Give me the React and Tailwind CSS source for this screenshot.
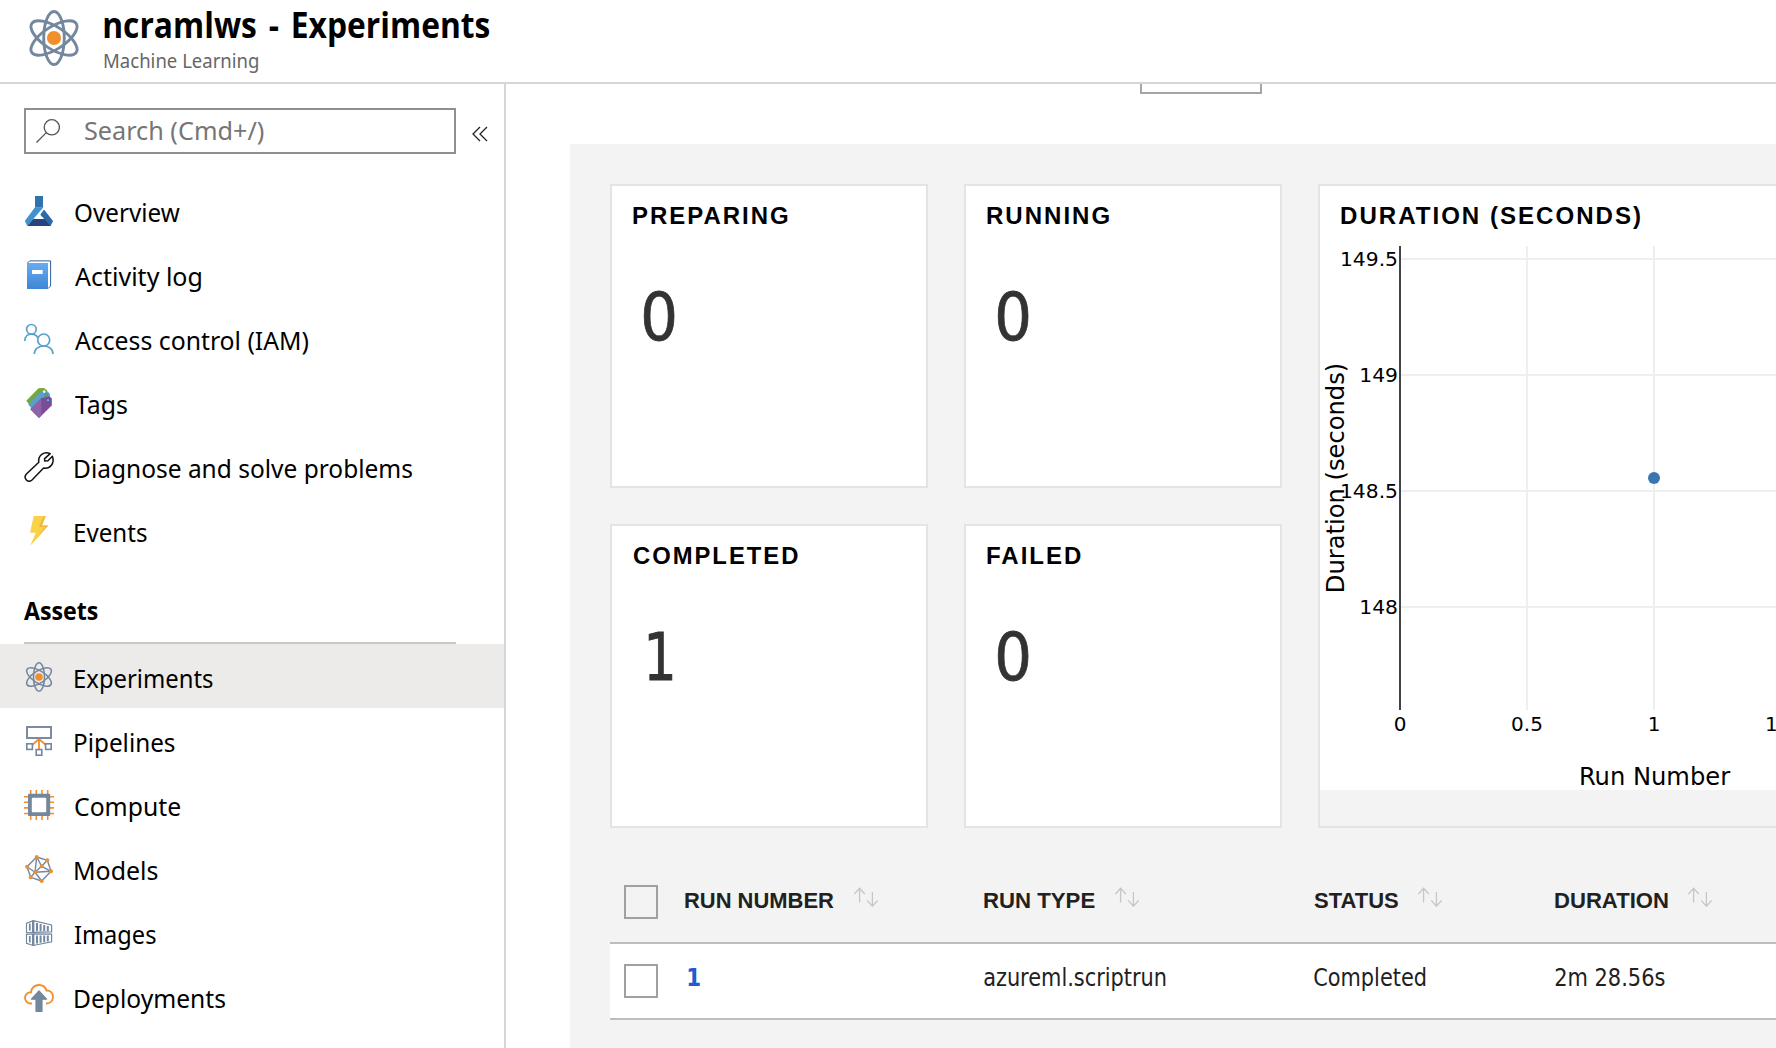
import React, { useLayoutEffect, useRef, useState } from "react";

/* Single line of text whose drawn glyphs start at the left edge and span `w` pixels. */
function T({ w, className = "", children }) {
  const ref = useRef(null);
  const [fit, setFit] = useState({ s: 1, dx: 0 });
  useLayoutEffect(() => {
    const cs = getComputedStyle(ref.current);
    const ctx = document.createElement("canvas").getContext("2d");
    ctx.font = `${cs.fontWeight} ${cs.fontSize} ${cs.fontFamily}`;
    if (cs.letterSpacing !== "normal") ctx.letterSpacing = cs.letterSpacing;
    if (cs.wordSpacing !== "normal") ctx.wordSpacing = cs.wordSpacing;
    const m = ctx.measureText(ref.current.textContent);
    const ink = m.actualBoundingBoxRight + m.actualBoundingBoxLeft;
    setFit({ s: w / ink, dx: m.actualBoundingBoxLeft });
  }, [w]);
  return (
    <span className={"block shrink-0 whitespace-nowrap " + className} style={{ width: w }}>
      <span
        ref={ref}
        className="inline-block origin-left align-top"
        style={{ transform: `scaleX(${fit.s}) translateX(${fit.dx}px)` }}
      >
        {children}
      </span>
    </span>
  );
}

const SLATE = "#73879e";
const ORANGE = "#f28f2d";

function Icon({ size = "size-[30px]", children }) {
  return (
    <svg viewBox="0 0 30 30" className={"block shrink-0 overflow-visible " + size} fill="none">
      {children}
    </svg>
  );
}

function Atom({ size }) {
  return (
    <Icon size={size}>
      <g stroke={SLATE} strokeWidth="1.55">
        <ellipse cx="15" cy="15" rx="5.5" ry="14.2" />
        <ellipse cx="15" cy="15" rx="6" ry="14.2" transform="rotate(57 15 15)" />
        <ellipse cx="15" cy="15" rx="6" ry="14.2" transform="rotate(-57 15 15)" />
      </g>
      <circle cx="15" cy="15" r="3.8" fill={ORANGE} />
    </Icon>
  );
}

const Flask = () => (
  <Icon>
    <path d="M11 0H19V11.5H11Z" fill="#2f72ad" />
    <path d="M9 23H21.5L27 30H3Z" fill="#27457c" />
    <path d="M11 11.3H19.5L3.3 30L0.8 25Z" fill="#4191cf" />
    <path d="M14.5 17.5L19 13L18 20Z" fill="#fff" />
    <path d="M20 13.5L29 25L26.7 30L16.3 18.8Z" fill="#2b6aa8" />
  </Icon>
);

const Book = () => (
  <Icon>
    <defs>
      <linearGradient id="book" x1="0" y1="0" x2="0" y2="1">
        <stop offset="0" stopColor="#66acf0" />
        <stop offset="1" stopColor="#3f86d4" />
      </linearGradient>
    </defs>
    <path d="M3.3 3.2L5.6 0.9H26.6V26L24 28.6" stroke="#2d5f9e" strokeWidth="1" />
    <path d="M3 3H24V29H3Z" fill="url(#book)" />
    <path d="M8 10H18.7V14H8Z" fill="#fff" />
  </Icon>
);

const People = () => (
  <Icon>
    <g stroke="#57a2cd" strokeWidth="1.7">
      <circle cx="7.4" cy="5.3" r="4.8" />
      <circle cx="19.7" cy="16" r="6" />
      <path d="M0.8 17C0.8 12.5 3.8 10.2 7.4 10.2C10.2 10.2 12.6 11.4 13.8 13.8" />
      <path d="M10.3 30C10.3 24.8 14.6 22 19.7 22C24.8 22 29 24.8 29 30" />
    </g>
  </Icon>
);

const Tags = () => (
  <Icon>
    <path d="M2.3 12.7L14.5 0.3L20 0L23.3 2.5V8L6 17.5Z" fill="#72a83d" />
    <path d="M4.3 16.5L16.5 4.3L24 3.8L26 6.3V12L8 21Z" fill="#5aa0cc" />
    <path d="M6.3 21.3L17.5 10L25.5 8.3L27.8 10.5V17.5L15 30Z" fill="#7a4c99" />
    <path d="M6.3 21.3L17.3 10.2V27.7L15 30Z" fill="#8d62a9" />
    <circle cx="20.2" cy="3.6" r="1.3" fill="#fff" />
    <circle cx="22.2" cy="7.3" r="1.5" fill="#72a83d" stroke="#3f7fa5" strokeWidth=".6" />
    <circle cx="24" cy="12.2" r="1.6" fill="#5fb6dd" stroke="#5a3a7c" strokeWidth=".6" />
  </Icon>
);

const Wrench = () => (
  <Icon>
    <path
      d="M26.2 1.6C20 -1 13.8 3.2 14.8 10.2L2.2 22.3C-1 26.3 4 31.5 8 28L19.6 16.1C26 17.2 31 11.5 28.4 4.2L23.9 8.7L20.7 9L20.6 6.6Z"
      stroke="#111"
      strokeWidth="1.5"
      strokeLinejoin="round"
    />
  </Icon>
);

const Bolt = () => (
  <Icon>
    <path d="M9.7 0H21.7L18 9.5H24.3L6.3 29.7L11.7 16.7H6Z" fill="#f8d247" />
    <path d="M21.7 0L18 9.5H24.3L10 25.5L21 11H14.8L19.8 0Z" fill="#f3b83b" />
  </Icon>
);

const Pipelines = () => (
  <Icon>
    <path d="M15 12V23M14.5 13.5L7.5 19.5M15.5 13.5L22.5 19.5" stroke={ORANGE} strokeWidth="1.8" />
    <g stroke={SLATE} fill="#fff">
      <rect x="3" y="1" width="24" height="11" strokeWidth="1.9" />
      <rect x="2.8" y="17.8" width="5.6" height="5.6" strokeWidth="1.6" />
      <rect x="12.2" y="23.6" width="5.6" height="5.6" strokeWidth="1.6" />
      <rect x="21.6" y="17.8" width="5.6" height="5.6" strokeWidth="1.6" />
    </g>
  </Icon>
);

const Compute = () => (
  <Icon>
    <path
      d="M6.7 0V30M12.3 0V30M18 0V30M23.7 0V30M0 6.7H30M0 12.3H30M0 17.9H30M0 23.5H30"
      stroke={ORANGE}
      strokeWidth="1.6"
    />
    <rect x="4" y="3.8" width="22.2" height="22.2" rx="1" fill={SLATE} />
    <rect x="7.8" y="7.7" width="14.4" height="14.6" rx="1" fill="#fff" />
  </Icon>
);

const NODES = [[12.7, 3], [23.3, 6.3], [3, 12.7], [17.7, 12.3], [27, 17.3], [11, 18.3], [6.7, 23.3], [17.7, 27]];
const EDGES = [[0, 1], [0, 2], [0, 5], [0, 3], [1, 3], [1, 4], [2, 5], [2, 6], [3, 5], [3, 4], [5, 4], [5, 6], [6, 7], [7, 4], [5, 7]];
const Models = () => (
  <Icon>
    <g stroke={SLATE} strokeWidth="1.4">
      {EDGES.map(([a, b]) => (
        <line key={a + "-" + b} x1={NODES[a][0]} y1={NODES[a][1]} x2={NODES[b][0]} y2={NODES[b][1]} />
      ))}
    </g>
    {NODES.map(([x, y]) => (
      <circle key={x + "-" + y} cx={x} cy={y} r="2" fill={ORANGE} />
    ))}
  </Icon>
);

const Containers = () => (
  <Icon>
    <g stroke={SLATE} strokeWidth="1.2">
      <path d="M2.5 5.3L9.2 2.6L27.6 7V13.8L9.2 14.3L2.5 14.8Z" />
      <path d="M2.5 16.5L9.2 15.9L27.6 16.2V23.8L9.2 27.5L2.5 25.2Z" />
      <path d="M9.2 2.6V14.3M9.2 15.9V27.5" strokeWidth="2.4" />
      <path d="M5.8 5.5V12.8M5.8 18V24.5" strokeWidth="1.7" />
      <path d="M13 5V13.3M16.6 6V13.3M20.2 7V13.3M23.8 8V13.3M13 17.5V25.5M16.6 17.5V24.8M20.2 17.5V24.2M23.8 17.5V23.5" strokeWidth="2" />
    </g>
  </Icon>
);

const Deploy = () => (
  <Icon>
    <path
      d="M8 21.5H6.8C3.5 21.5 1 19 1 15.8C1 12.3 3.8 10.2 7 10.3C7.3 5.8 10.8 3 15 3C18.8 3 21.4 5 22.5 8.6C26 8.3 29 11 29 14.8C29 18.8 26.2 21.5 22.6 21.5H22"
      stroke={ORANGE}
      strokeWidth="1.9"
    />
    <path
      d="M15 9L22.6 17.2H18V29.3H12V17.2H7.4Z"
      fill={SLATE}
      stroke={SLATE}
      strokeWidth="1.2"
      strokeLinejoin="round"
    />
  </Icon>
);

function NavItem({ icon, label, w, active }) {
  return (
    <a className={"flex h-16 items-start pl-6 " + (active ? "bg-[#ecebe9]" : "")}>
      <span className="mt-[18px] mr-[21px]">{icon}</span>
      <T w={w} className="pt-[6px] text-[25px] leading-[56px]">{label}</T>
    </a>
  );
}

function StatCard({ title, w, value, vw, inset }) {
  return (
    <section className="h-[304px] w-[318px] border-2 border-[#e4e4e4] bg-white pl-[21px] font-['Liberation_Sans']">
      <T w={w} className="mt-[14px] text-[24px] font-bold leading-[32px] tracking-[2px]">{title}</T>
      <div className={inset}>
        <T w={vw} className="mt-[43px] font-['DejaVu_Sans'] text-[65px] leading-[86px] text-[#333] [-webkit-text-stroke:0.8px_#333]">{value}</T>
      </div>
    </section>
  );
}

function DurationChart() {
  return (
    <section className="row-span-2 w-[700px] border-2 border-[#e4e4e4]">
      <div className="h-[604px] bg-white">
        <div className="h-[60px] pt-[14px] pl-[21px]">
          <T w={299} className="font-['Liberation_Sans'] text-[24px] font-bold leading-[32px] tracking-[2px]">
            DURATION (SECONDS)
          </T>
        </div>
        <svg viewBox="1320 246 696 544" className="block h-[544px] w-[696px] font-['DejaVu_Sans']">
          <path d="M1527 246V710M1654 246V710M1401 259H2016M1401 375H2016M1401 491H2016M1401 607H2016" stroke="#eee" strokeWidth="2" />
          <path d="M1400 246V710" stroke="#444" strokeWidth="2" />
          <circle cx="1654" cy="478" r="6" fill="#3a76af" />
          <g fontSize="20.3" textAnchor="end">
            <text x="1398" y="266">149.5</text>
            <text x="1398" y="382">149</text>
            <text x="1398" y="498">148.5</text>
            <text x="1398" y="614">148</text>
          </g>
          <g fontSize="20" textAnchor="middle">
            <text x="1400" y="731">0</text>
            <text x="1527" y="731">0.5</text>
            <text x="1654" y="731">1</text>
            <text x="1781" y="731">1.5</text>
          </g>
          <text x="1654.5" y="785" fontSize="24.2" textAnchor="middle">Run Number</text>
          <text transform="translate(1344 478) rotate(-90)" fontSize="24.2" textAnchor="middle">Duration (seconds)</text>
        </svg>
      </div>
    </section>
  );
}

const SortArrows = () => (
  <svg viewBox="0 0 24 20" className="mb-[8px] block h-5 w-6 shrink-0" fill="none" stroke="#c6c6c6" strokeWidth="1.3">
    <path d="M5.6 15.5V1.2M0.4 7L5.6 1.2L10.8 7M18.4 5V19.2M13.2 13.4L18.4 19.2L23.6 13.4" />
  </svg>
);

const Head = ({ w, children }) => (
  <div className="flex items-center gap-5">
    <T w={w} className="text-[22px] font-bold leading-[28px]">{children}</T>
    <SortArrows />
  </div>
);

const Box = ({ className = "" }) => (
  <span className={"ml-[14px] block size-[34px] border-2 border-[#a0a0a0] " + className} />
);

export default function App() {
  return (
    <div className="flex h-[1048px] w-[1776px] flex-col overflow-hidden bg-white font-['Noto_Sans',sans-serif] text-black">
      <header className="flex h-[84px] shrink-0 border-b-2 border-[#d6d6d6] pl-[26px]">
        <div className="mt-[10px]"><Atom size="size-[56px]" /></div>
        <div className="ml-[21.5px]">
          <T w={386} className="mt-[2px] font-['Open_Sans'] text-[35px] font-bold leading-[46px] [word-spacing:4px]">ncramlws - Experiments</T>
          <T w={154.5} className="-mt-px text-[19.5px] leading-[27px] text-[#666]">Machine Learning</T>
        </div>
      </header>
      <div className="flex min-h-0 flex-1">
        <aside className="w-[506px] shrink-0 border-r-2 border-[#d6d6d6]">
          <div className="mt-6 ml-6 flex items-center">
            <div className="flex h-[46px] w-[432px] items-center border-2 border-[#8f8f8f] pl-[10px]">
              <svg viewBox="0 0 24 24" className="size-6" fill="none" stroke="#555" strokeWidth="1.3">
                <circle cx="15.8" cy="8.3" r="7.6" />
                <path d="M10.3 13.6L0.5 23.5" />
              </svg>
              <T w={179} className="ml-[25px] text-[24.5px] leading-[38px] text-[#757575]">Search (Cmd+/)</T>
            </div>
            <svg viewBox="0 0 16 16" className="mt-[6px] ml-4 size-4" fill="none" stroke="#222" strokeWidth="1.3">
              <path d="M8 1L1 8L8 15M15 1L8 8L15 15" />
            </svg>
          </div>
          <nav className="mt-6">
            <NavItem icon={<Flask />} label="Overview" w={105} />
            <NavItem icon={<Book />} label="Activity log" w={126.5} />
            <NavItem icon={<People />} label="Access control (IAM)" w={233.5} />
            <NavItem icon={<Tags />} label="Tags" w={52} />
            <NavItem icon={<Wrench />} label="Diagnose and solve problems" w={337} />
            <NavItem icon={<Bolt />} label="Events" w={71.5} />
            <h2 className="mr-12 ml-6 h-[82px] border-b-2 border-[#c8c8c8] pt-[30px]">
              <T w={74} className="font-['Open_Sans'] text-[25px] font-bold leading-[36px]">Assets</T>
            </h2>
            <NavItem icon={<Atom />} label="Experiments" w={137.5} active />
            <NavItem icon={<Pipelines />} label="Pipelines" w={99.5} />
            <NavItem icon={<Compute />} label="Compute" w={105} />
            <NavItem icon={<Models />} label="Models" w={82.5} />
            <NavItem icon={<Containers />} label="Images" w={80.5} />
            <NavItem icon={<Deploy />} label="Deployments" w={150} />
          </nav>
        </aside>
        <main className="flex min-w-0 flex-1 flex-col overflow-hidden pl-16">
          <div className="h-[60px] shrink-0">
            <div className="ml-[570px] h-[10px] w-[122px] border-2 border-t-0 border-[#a6a6a6]" />
          </div>
          <div className="flex-1 bg-[#f3f3f3] pt-10 pl-10">
            <div className="grid grid-cols-[318px_318px_700px] grid-rows-[304px_304px] gap-9">
              <StatCard title="PREPARING" w={155} value="0" vw={31} inset="pl-[10.5px]" />
              <StatCard title="RUNNING" w={122.5} value="0" vw={31} inset="pl-[10.5px]" />
              <DurationChart />
              <StatCard title="COMPLETED" w={165} value="1" vw={23.5} inset="pl-[15.5px]" />
              <StatCard title="FAILED" w={94} value="0" vw={31} inset="pl-[10.5px]" />
            </div>
            <div className="mt-[28px] text-[#212121]">
              <div className="grid h-[88px] grid-cols-[75px_299px_330px_241px_1fr] items-center border-b-2 border-[#bdbdbd] pt-[3px] font-['Liberation_Sans']">
                <Box className="mt-[3px]" />
                <Head w={149}>RUN NUMBER</Head>
                <Head w={110.5}>RUN TYPE</Head>
                <Head w={84}>STATUS</Head>
                <Head w={113}>DURATION</Head>
              </div>
              <div className="grid h-[76px] grid-cols-[75px_299px_330px_241px_1fr] items-center border-b-2 border-[#bdbdbd] bg-white font-['DejaVu_Sans'] text-[24px] leading-[32px]">
                <Box />
                <div className="-mt-[6px] pl-[2.5px]"><T w={12.5} className="font-bold text-[#2459d6]">1</T></div>
                <T w={182} className="-mt-[6px]">azureml.scriptrun</T>
                <T w={112} className="-mt-[6px]">Completed</T>
                <T w={110} className="-mt-[6px]">2m 28.56s</T>
              </div>
            </div>
          </div>
        </main>
      </div>
    </div>
  );
}
